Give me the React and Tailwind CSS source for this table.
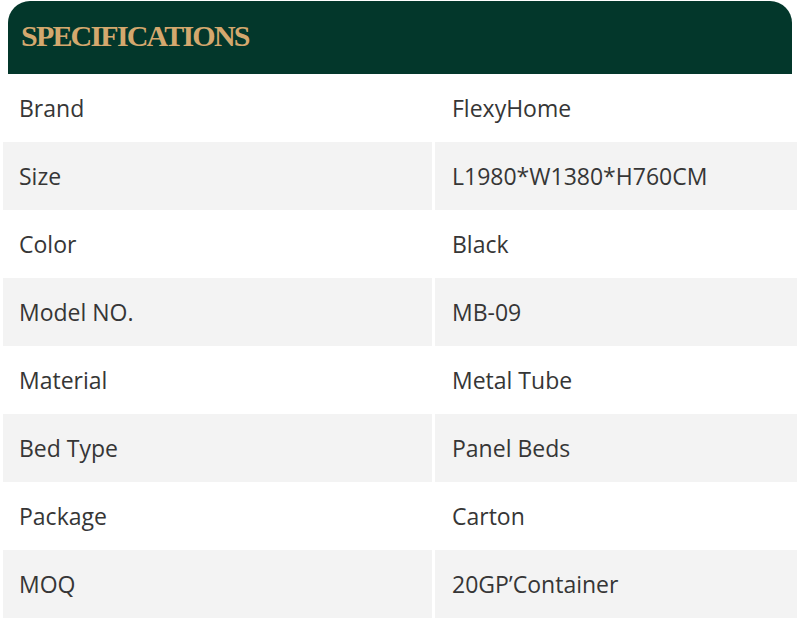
import React from "react";

const specs = [
  ["Brand", "FlexyHome"],
  ["Size", "L1980*W1380*H760CM"],
  ["Color", "Black"],
  ["Model NO.", "MB-09"],
  ["Material", "Metal Tube"],
  ["Bed Type", "Panel Beds"],
  ["Package", "Carton"],
  ["MOQ", "20GP’Container"],
];

function SpecRow({ label, value, shaded }) {
  const bg = shaded ? "bg-[#f3f3f3]" : "bg-white";
  return (
    <div className="flex h-[68px] gap-[3px]">
      <div className={`${bg} w-[429px] flex items-center pl-4`}>{label}</div>
      <div className={`${bg} flex-1 flex items-center pl-[17px]`}>{value}</div>
    </div>
  );
}

export default function App() {
  return (
    <div className="w-[800px] h-[620px] bg-white overflow-hidden font-['Open_Sans',sans-serif] text-[23px] text-[#363636]">
      <div className="pt-px px-2">
        <div className="h-[73px] bg-[#03372b] rounded-t-[22px] flex items-center pl-[13px]">
          <h2 className="font-['Liberation_Serif',serif] font-bold text-[30px] tracking-[-1.8px] text-[#d4a86e] uppercase pb-1">
            Specifications
          </h2>
        </div>
      </div>
      <div className="px-[3px]">
        {specs.map(([label, value], i) => (
          <SpecRow key={label} label={label} value={value} shaded={i % 2 === 1} />
        ))}
      </div>
    </div>
  );
}
